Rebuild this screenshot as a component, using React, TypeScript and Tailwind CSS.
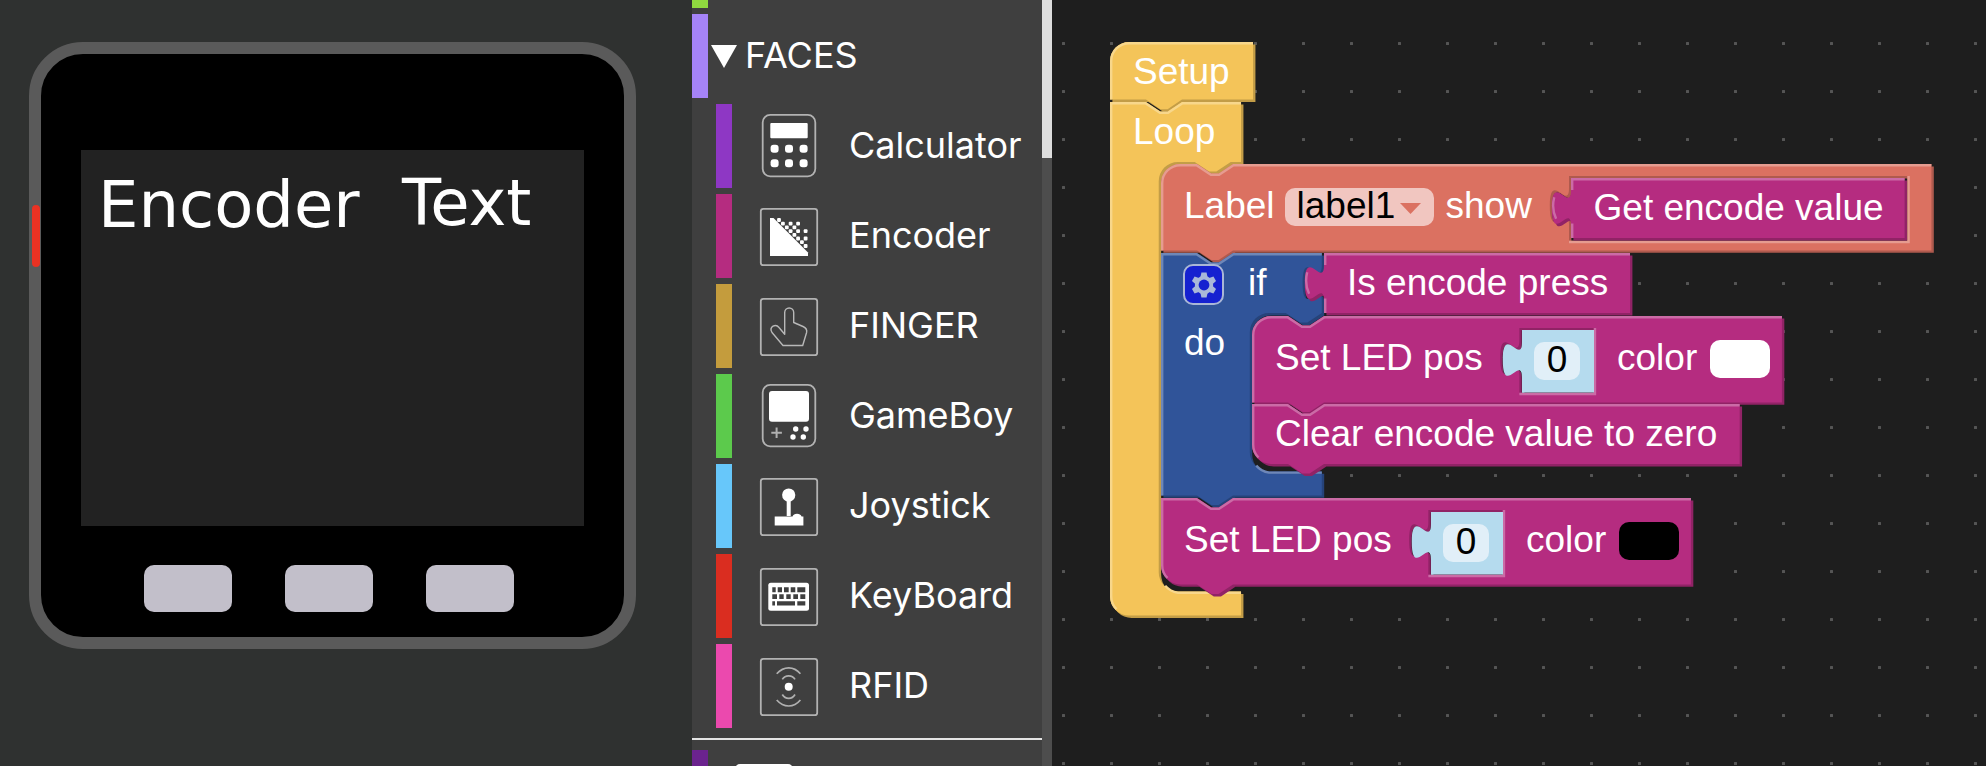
import type { ReactNode } from "react";

/* ---------- Device preview ---------- */

function DevicePreview() {
  return (
    <section aria-label="Device preview" className="overflow-hidden bg-[#2f3130] pt-[42px] pl-[29px]">
      <div className="relative aspect-square w-[607px] max-w-full rounded-[54px] border-[12px] border-[#5a5a5a] bg-black px-10 pt-24">
        <button
          type="button"
          aria-label="Power"
          className="absolute top-[151px] left-[-9px] h-[62px] w-2 rounded-full bg-[#eb3223]"
        />
        <div className="relative h-[376px] bg-[#222222] font-['DejaVu_Sans',sans-serif] text-[64px] leading-[76px] text-white">
          <span className="absolute top-[17px] left-[17px]">Encoder</span>
          <span className="absolute top-[15px] left-[321px]">Text</span>
        </div>
        <div className="mt-[39px] flex justify-center gap-[53px] pr-[7px]">
          {["A", "B", "C"].map((name) => (
            <button
              key={name}
              type="button"
              aria-label={"Button " + name}
              className="h-[47px] w-[88px] rounded-[10px] bg-[#c2bfca]"
            />
          ))}
        </div>
      </div>
    </section>
  );
}

/* ---------- Toolbox ---------- */

function IconFrame({ tall = false, children }: { tall?: boolean; children: ReactNode }) {
  return (
    <svg viewBox="0 0 64 64" className="size-16 shrink-0" fill="none" aria-hidden="true">
      {tall ? (
        <rect x="5.7" y="0.9" width="52.6" height="61.4" rx="7.5" stroke="#b2b2b2" strokeWidth="1.8" />
      ) : (
        <rect x="3.8" y="4.8" width="56.4" height="56.4" rx="2.5" stroke="#b2b2b2" strokeWidth="1.8" />
      )}
      {children}
    </svg>
  );
}

function CalculatorIcon() {
  return (
    <IconFrame tall>
      <rect x="13.3" y="9" width="37.4" height="15.3" rx="1" fill="#fff" />
      {[34.7, 49.3].map((y) =>
        [17.6, 32, 46.6].map((x) => (
          <rect key={x + "-" + y} x={x - 4} y={y - 4} width="8" height="8" rx="3" fill="#fff" />
        )),
      )}
    </IconFrame>
  );
}

const DITHER = [
  [22, 16], [25.9, 19.7], [33.6, 19.7], [41.1, 19.7], [29.8, 23.4], [37.4, 23.4],
  [33.6, 27.1], [41.1, 27.1], [48.6, 27.1], [37.4, 30.8], [41.1, 34.5],
  [48.6, 34.5], [44.9, 38.2], [48.6, 42],
];

function EncoderIcon() {
  return (
    <IconFrame>
      <path d="M13 14h3.500L51 48.500V52H13z" fill="#fff" />
      {DITHER.map(([x, y]) => (
        <rect key={x + "-" + y} x={x - 1.9} y={y - 1.9} width="3.8" height="3.8" rx="1" fill="#fff" />
      ))}
    </IconFrame>
  );
}

function FingerIcon() {
  return (
    <IconFrame>
      <path
        d="M27.700 40.300V18.500a4.500 4.500 0 0 1 9 0V28.500L46 32.500Q50.500 34.500 49.600 38.500L45.700 51.500H26L15 38.500Q12.500 34.500 16 32.200Q19.500 30.300 22 33.500z"
        stroke="#b8b8b8"
        strokeWidth="1.4"
        strokeLinejoin="round"
      />
    </IconFrame>
  );
}

function GameBoyIcon() {
  return (
    <IconFrame tall>
      <rect x="12" y="7" width="40" height="30.700" rx="3" fill="#fff" />
      <path d="M19.600 43.400v10.600M14.300 48.700h10.600" stroke="#b0b0b0" strokeWidth="2" />
      <circle cx="38.700" cy="45" r="2.700" fill="#fff" />
      <circle cx="49" cy="45" r="2.700" fill="#fff" />
      <circle cx="36" cy="53" r="2.700" fill="#fff" />
      <circle cx="46.300" cy="53" r="2.700" fill="#fff" />
    </IconFrame>
  );
}

function JoystickIcon() {
  return (
    <IconFrame>
      <circle cx="31.700" cy="21" r="6.600" fill="#fff" />
      <path d="M29.700 26h4v16h-4z" fill="#fff" />
      <path d="M17.700 42.500H35.500Q36.500 39.800 40 39.800T44.600 42.500H46.400V51.500H17.700z" fill="#fff" />
    </IconFrame>
  );
}

function KeyBoardIcon() {
  return (
    <IconFrame>
      <rect x="11.300" y="18.700" width="40.700" height="28" rx="2.500" fill="#fff" />
      <path
        d="M15.300 23.300h3.400v5h-3.400zM20.700 23.300h4.300v5h-4.300zM27 23.300h4.700v5h-4.700zM33.700 23.300h4.600v5h-4.600zM40.300 23.300h8v5h-8zM15.300 30.200h4.700v4.800h-4.700zM22.300 30.200h4.400v4.800h-4.400zM29.300 30.200h4.400v4.800h-4.400zM36.300 30.200h4.700v4.800h-4.700zM43.300 30.200h5v4.800h-5zM15.300 37.200h2.700v4.400h-2.700zM20 37.200h18v4.400h-18zM40.300 37.200h8v4.400h-8z"
        fill="#3f3f3f"
      />
    </IconFrame>
  );
}

function RfidIcon() {
  return (
    <IconFrame>
      <circle cx="31.700" cy="32.700" r="4" fill="#fff" />
      <path
        d="M19.700 19.700Q25 13.800 31.700 13.800T43.400 19.700M25.300 25.400Q27.500 21.800 31.700 21.800T38 25.400M25.300 40.500Q27.500 44.300 31.700 44.300T38 40.500M19.700 46Q25 52 31.700 52T43.400 46"
        stroke="#b0b0b0"
        strokeWidth="1.700"
      />
    </IconFrame>
  );
}

const FACES = [
  { name: "Calculator", bar: "bg-[#8e37c4]", Icon: CalculatorIcon },
  { name: "Encoder", bar: "bg-[#b52c80]", Icon: EncoderIcon },
  { name: "FINGER", bar: "bg-[#c49c3d]", Icon: FingerIcon },
  { name: "GameBoy", bar: "bg-[#5cca4c]", Icon: GameBoyIcon },
  { name: "Joystick", bar: "bg-[#67c7fa]", Icon: JoystickIcon },
  { name: "KeyBoard", bar: "bg-[#da2d20]", Icon: KeyBoardIcon },
  { name: "RFID", bar: "bg-[#eb49ae]", Icon: RfidIcon },
];

function Toolbox() {
  return (
    <nav
      aria-label="Toolbox"
      className="flex overflow-hidden bg-[#3f3f3f] font-[Inter,'Liberation_Sans',sans-serif] text-[36px] leading-[54px] text-white"
    >
      <div className="flex min-w-0 flex-1 flex-col gap-[6px]">
        <div className="h-2 w-4 shrink-0 bg-[#8fd93f]" />
        <button type="button" aria-expanded="true" className="flex h-[84px] w-full shrink-0 items-center text-left">
          <span className="h-full w-4 bg-[#a583f7]" />
          <svg viewBox="0 0 26 23" className="ml-[3px] h-[23px] w-[26px]" aria-hidden="true">
            <path d="M0 0H26L13 23z" fill="#fff" />
          </svg>
          <span className="mb-[2px] ml-2">FACES</span>
        </button>
        <ul className="flex flex-col gap-[6px] pl-6">
          {FACES.map(({ name, bar, Icon }) => (
            <li key={name}>
              <button type="button" className="flex h-[84px] w-full items-center text-left">
                <span className={"mr-[25px] h-full w-4 shrink-0 " + bar} />
                <Icon />
                <span className="mb-[2px] ml-7">{name}</span>
              </button>
            </li>
          ))}
        </ul>
        <hr className="mt-1 mb-1 border-t-2 border-[#e4e4e4]" />
        <button type="button" aria-label="Next category" className="flex h-[84px] shrink-0 items-start text-left">
          <span className="mr-[27px] h-full w-4 bg-[#6b238e]" />
          <span className="mt-[14px] size-[58px] rounded-[5px] border-2 border-white" />
        </button>
      </div>
      <div className="w-[10px] shrink-0 bg-[#4d4d4d]">
        <div className="h-[158px] bg-[#dddddd]" />
      </div>
    </nav>
  );
}

/* ---------- Blocks ---------- */

const COLORS = {
  yellow: { fill: "#f4c459", light: "#f8d78b", dark: "#c39d47" },
  coral: { fill: "#db7161", light: "#e69c90", dark: "#af5a4e" },
  blue: { fill: "#305499", light: "#6e87b8", dark: "#26437a" },
  magenta: { fill: "#b52c80", light: "#cb6ba6", dark: "#912366" },
  pale: { fill: "#b5dbee", light: "#b5dbee", dark: "none" },
};

type ShapeProps = { color: keyof typeof COLORS; outline: string; highlight: string };

function Shape({ color, outline, highlight }: ShapeProps) {
  const c = COLORS[color];
  return (
    <svg className="pointer-events-none absolute top-0 left-0 size-px overflow-visible" aria-hidden="true">
      <g transform="scale(2.4)">
        <path d={outline} fill={c.dark} fillRule="evenodd" transform="translate(1 1)" />
        <path d={outline} fill={c.fill} fillRule="evenodd" />
        <path d={highlight} fill="none" stroke={c.light} strokeWidth="1" />
      </g>
    </svg>
  );
}

const TAB_DOWN = "v5c0,10 -8,-8 -8,7.5s8,-2.5 8,7.5";
const TAB_UP = "c0,-10 -8,8 -8,-7.5s8,2.5 8,-7.5";

/* Output block: puzzle tab on the left edge. */
function valueShape(w: number, h: number) {
  return {
    outline: `M0,0H${w}V${h}H0V20${TAB_UP}z`,
    highlight: `M${w},.5H.5V5M.5,${h}V19M-6.200,17Q-8.200,13 -7,8`,
  };
}

/* Socket for an inline value block whose corner is at x,y. */
function socket(x: number, y: number, w: number, h: number) {
  const l = x - 1;
  const t = y - 1;
  const r = x + w + 1;
  const b = y + h + 1;
  return {
    hole: `M${l},${t}${TAB_DOWN}V${b}H${r}V${t}z`,
    rim: `M${l},${b + 0.5}H${r + 0.5}V${t}`,
  };
}

/* Statement block with notches above and below. */
function statementShape(
  w: number,
  h: number,
  opts: { roundTop?: boolean; roundBottom?: boolean; notchTop?: boolean; hole?: string; rim?: string } = {},
) {
  const { roundTop, roundBottom, notchTop = true, hole = "", rim = "" } = opts;
  const top = notchTop ? "H15l6,4 3,0 6,-4" : "";
  const topLight = notchTop ? "H14.800l6,4 3.400,0 6,-4" : "";
  return {
    outline:
      (roundTop ? "M0,8A8,8 0 0,1 8,0" : "M0,0") +
      `${top}H${w}V${h}H30l-6,4 -3,0 -6,-4` +
      (roundBottom ? `H8a8,8 0 0,1 -8,-8z` : "H0z") +
      hole,
    highlight:
      (roundBottom ? `M2.700,${h - 2.7}A7.5,7.5 0 0,1 .5,${h - 8}` : `M.5,${h}`) +
      (roundTop ? "V8A7.5,7.5 0 0,1 8,.5" : "V.5") +
      `${topLight}H${w}` +
      rim,
  };
}

const chamberLight = (sx: number, bottom: number, w: number) =>
  `M${sx + 2.7},${bottom - 2.4}A8.500,8.500 0 0,0 ${sx + 8},${bottom + 0.5}H${w}`;

const LOOP = {
  outline:
    "M0,0H15l6,4 3,0 6,-4H54.600V25H50.300l-6,4 -3,0 -6,-4H28.300a8,8 0 0,0 -8,8V196a8,8 0 0,0 8,8H54.600V214H8a8,8 0 0,1 -8,-8z",
  highlight:
    "M2.700,211.300A7.500,7.500 0 0,1 .5,206V.5H14.800l6,4 3.400,0 6,-4H54.600" + chamberLight(20.3, 204, 54.6),
};

const IF = {
  outline: `M0,0H15l6,4 3,0 6,-4H67${TAB_DOWN}V25l-6,4 -3,0 -6,-4H45a8,8 0 0,0 -8,8V83a8,8 0 0,0 8,8H67V101H30l-6,4 -3,0 -6,-4H0z`,
  highlight: "M.5,101V.5H14.800l6,4 3.400,0 6,-4H67" + chamberLight(37, 91, 67),
};

function Words({ children }: { children: ReactNode }) {
  return <span className="relative block whitespace-pre">{children}</span>;
}

function NumberBlock({ label }: { label: string }) {
  return (
    <div className="relative flex h-[62px] w-[70px] items-center justify-center">
      <Shape color="pale" {...valueShape(30, 26)} />
      <input
        aria-label={label}
        defaultValue="0"
        className="relative h-[38px] w-[46px] rounded-[10px] bg-[#e1eff8] pb-[2px] text-center text-black"
      />
    </div>
  );
}

function Swatch({ className, label }: { className: string; label: string }) {
  return (
    <button type="button" aria-label={label} className={"mt-[10px] h-[38px] w-[60px] rounded-[10px] " + className} />
  );
}

function LedRow({ swatch, label }: { swatch: string; label: string }) {
  return (
    <div className="relative flex items-start pt-[14px] pl-[23px]">
      <div className="w-[247px]">
        <Words>Set LED pos</Words>
      </div>
      <NumberBlock label={label + " position"} />
      <div className="ml-[25px] flex gap-[13px]">
        <Words>color</Words>
        <Swatch className={swatch} label={label + " color"} />
      </div>
    </div>
  );
}

function GearIcon() {
  return (
    <svg viewBox="0 0 26 26" className="size-[26px]" aria-hidden="true">
      <g fill="#a9b8d8">
        <circle cx="13" cy="13" r="9.200" />
        {[0, 60, 120].map((angle) => (
          <path
            key={angle}
            d="M10.400.6h5.200l.9 4.400v16l-.9 4.400h-5.200l-.9-4.400V5z"
            strokeLinejoin="round"
            transform={`rotate(${angle} 13 13)`}
          />
        ))}
      </g>
      <circle cx="13" cy="13" r="5.400" fill="#1521d0" />
    </svg>
  );
}

const getSocket = socket(171, 6, 139, 25);
const ledSocket = socket(112.4, 6, 29, 25);

function Workspace() {
  return (
    <main className="relative overflow-hidden bg-[#1e1e1e] font-['Liberation_Sans',Arial,sans-serif] text-[37px] leading-[56px] text-white">
      <svg className="absolute inset-0 size-full" aria-hidden="true">
        <defs>
          <pattern id="grid" x="10" y="42" width="48" height="48" patternUnits="userSpaceOnUse">
            <rect width="3" height="3" rx="0.500" fill="#555555" />
          </pattern>
        </defs>
        <rect width="100%" height="100%" fill="url(#grid)" />
      </svg>

      <div className="absolute top-[42px] left-[58px] pt-[2px] pl-[23px]">
        <Shape color="yellow" {...statementShape(59.6, 24, { roundTop: true, notchTop: false })} />
        <Words>Setup</Words>
      </div>

      <div className="absolute top-[102px] left-[58px] pt-[2px] pl-[23px]">
        <Shape color="yellow" {...LOOP} />
        <Words>Loop</Words>
      </div>

      <div className="absolute top-[164px] left-[109px]">
        <Shape
          color="coral"
          {...statementShape(321, 36, { roundTop: true, hole: getSocket.hole, rim: getSocket.rim })}
        />
        <div className="relative flex items-start pt-[14px] pl-[23px]">
          <label htmlFor="label-name">Label</label>
          <div className="relative mt-[10px] ml-[10px] w-[149px]">
            <select
              id="label-name"
              className="block h-[38px] w-full appearance-none rounded-[10px] bg-[#f1c6c0] pb-[2px] pl-3 leading-[36px] text-black"
            >
              <option>label1</option>
            </select>
            <svg
              viewBox="0 0 21 11"
              className="pointer-events-none absolute top-[15px] right-[13px] h-[11px] w-[21px]"
              aria-hidden="true"
            >
              <path d="M0 0H21L10.500 11z" fill="#db7161" />
            </svg>
          </div>
          <div className="ml-3 w-[125px]">
            <Words>show</Words>
          </div>
          <div className="relative h-[62px] pt-[2px] pl-[23px]">
            <Shape color="magenta" {...valueShape(139, 25)} />
            <Words>Get encode value</Words>
          </div>
        </div>
      </div>

      <div className="absolute top-[253px] left-[109px]">
        <Shape color="blue" {...IF} />
        <div className="relative flex h-[60px] items-start pt-[2px] pl-[22px]">
          <button
            type="button"
            aria-label="Edit if block"
            className="mt-[9px] flex size-[41px] items-center justify-center rounded-[10px] border-2 border-[#a9b6d6] bg-[#1521d0]"
          >
            <GearIcon />
          </button>
          <div className="ml-6">
            <Words>if</Words>
          </div>
        </div>
        <div className="pt-[2px] pl-[23px]">
          <Words>do</Words>
        </div>
      </div>

      <div className="absolute top-[253px] left-[272px] pt-[2px] pl-[23px]">
        <Shape color="magenta" {...valueShape(127.5, 25)} />
        <Words>Is encode press</Words>
      </div>

      <div className="absolute top-[316px] left-[200px]">
        <Shape
          color="magenta"
          {...statementShape(220.8, 36, { roundTop: true, hole: ledSocket.hole, rim: ledSocket.rim })}
        />
        <LedRow swatch="bg-white" label="First LED" />
      </div>

      <div className="absolute top-[404px] left-[200px] pt-[2px] pl-[23px]">
        <Shape color="magenta" {...statementShape(203.2, 25, { roundBottom: true })} />
        <Words>Clear encode value to zero</Words>
      </div>

      <div className="absolute top-[498px] left-[109px]">
        <Shape
          color="magenta"
          {...statementShape(220.8, 36, { roundBottom: true, hole: ledSocket.hole, rim: ledSocket.rim })}
        />
        <LedRow swatch="bg-black" label="Second LED" />
      </div>
    </main>
  );
}

export default function App() {
  return (
    <div className="grid h-screen grid-cols-[minmax(0,692fr)_360px_minmax(0,934fr)] overflow-hidden">
      <DevicePreview />
      <Toolbox />
      <Workspace />
    </div>
  );
}
